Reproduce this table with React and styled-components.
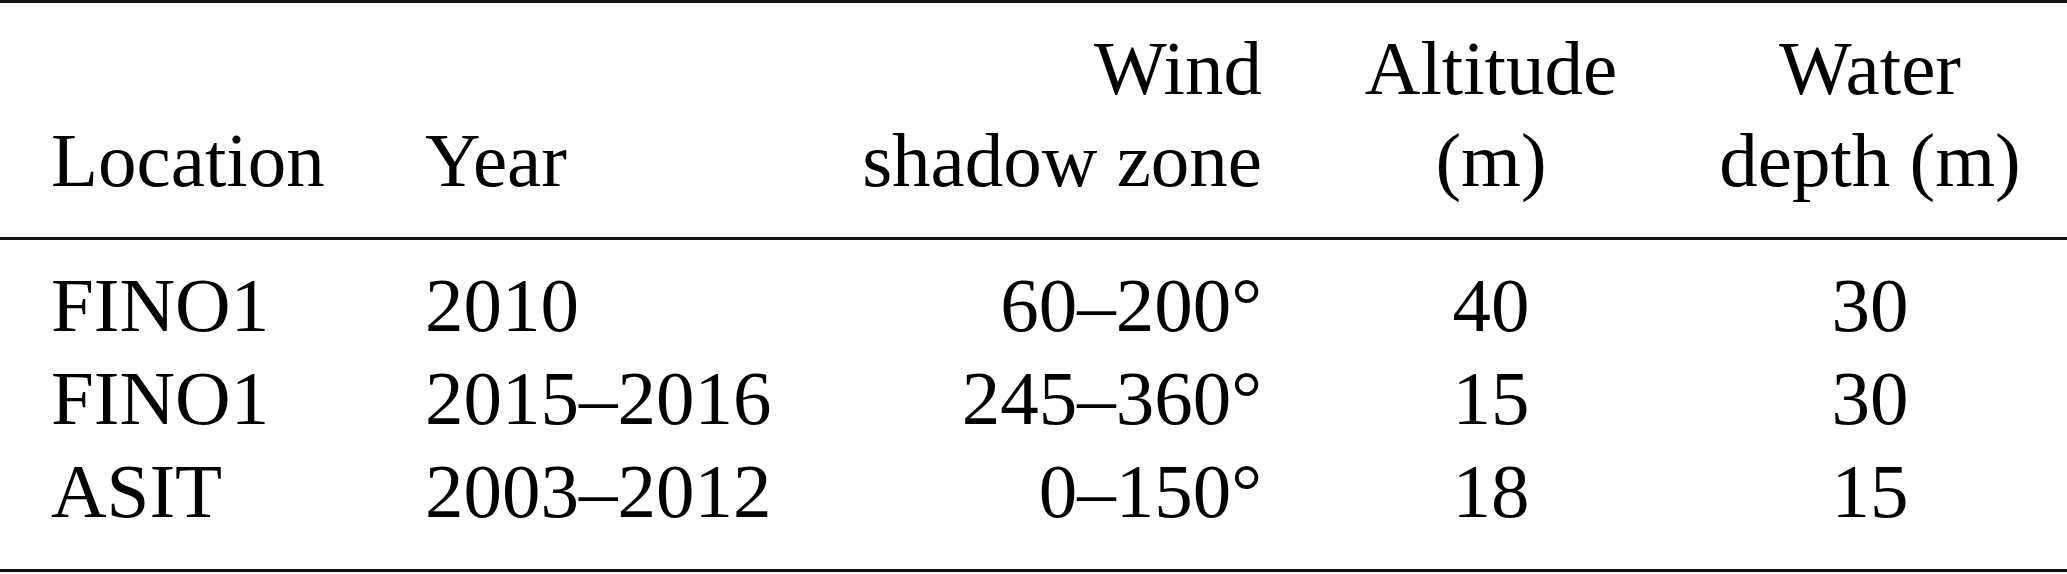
import React from 'react';
import styled, { createGlobalStyle } from 'styled-components';

const GlobalStyle = createGlobalStyle`
  html, body {
    margin: 0;
    padding: 0;
    background: #ffffff;
  }
  body {
    font-family: 'Liberation Serif', 'Times New Roman', serif;
    color: #000000;
  }
`;

const StyledTable = styled.table`
  width: 2067px;
  border-collapse: collapse;
  table-layout: fixed;
  font-family: 'Liberation Serif', 'Times New Roman', serif;
  font-size: 77px;
  border-top: 3px solid #111;
  border-bottom: 3px solid #111;
`;

const StyledCol = styled.col`
  width: ${({ $width }) => $width}px;
`;

const StyledHead = styled.thead`
  border-bottom: 3px solid #111;
`;

const StyledTh = styled.th`
  font-weight: normal;
  line-height: 92px;
  text-align: ${({ $align }) => $align};
  vertical-align: bottom;
  padding: 19px ${({ $pr }) => $pr || 0}px 31px ${({ $pl }) => $pl || 0}px;
  white-space: nowrap;
`;

const StyledRow = styled.tr`
  &:first-child td {
    padding-top: 19px;
  }
  &:last-child td {
    padding-bottom: 31px;
  }
`;

const StyledTd = styled.td`
  line-height: 93px;
  padding: 0 ${({ $pr }) => $pr || 0}px 0 ${({ $pl }) => $pl || 0}px;
  text-align: ${({ $align }) => $align};
  white-space: nowrap;
`;

// column widths and alignment (l, l, r, c, c)
const columns = [
  { width: 380, align: 'left', pl: 51 },
  { width: 460, align: 'left', pl: 45 },
  { width: 469, align: 'right', pr: 47 },
  { width: 364, align: 'center' },
  { width: 394, align: 'center' },
];

const header = [
  ['Location'],
  ['Year'],
  ['Wind', 'shadow zone'],
  ['Altitude', '(m)'],
  ['Water', 'depth (m)'],
];

const rows = [
  ['FINO1', '2010', '60–200°', '40', '30'],
  ['FINO1', '2015–2016', '245–360°', '15', '30'],
  ['ASIT', '2003–2012', '0–150°', '18', '15'],
];

const App = () => {
  return (
    <>
      <GlobalStyle />
      <StyledTable>
        <colgroup>
          {columns.map((col, i) => (
            <StyledCol key={i} $width={col.width} />
          ))}
        </colgroup>
        <StyledHead>
          <tr>
            {header.map((lines, j) => (
              <StyledTh key={j} $align={columns[j].align} $pl={columns[j].pl} $pr={columns[j].pr}>
                {lines.map((line, k) => (
                  <React.Fragment key={k}>
                    {k > 0 && <br />}
                    {line}
                  </React.Fragment>
                ))}
              </StyledTh>
            ))}
          </tr>
        </StyledHead>
        <tbody>
          {rows.map((row, i) => (
            <StyledRow key={i}>
              {row.map((cell, j) => (
                <StyledTd key={j} $align={columns[j].align} $pl={columns[j].pl} $pr={columns[j].pr}>
                  {cell}
                </StyledTd>
              ))}
            </StyledRow>
          ))}
        </tbody>
      </StyledTable>
    </>
  );
};

export default App;
